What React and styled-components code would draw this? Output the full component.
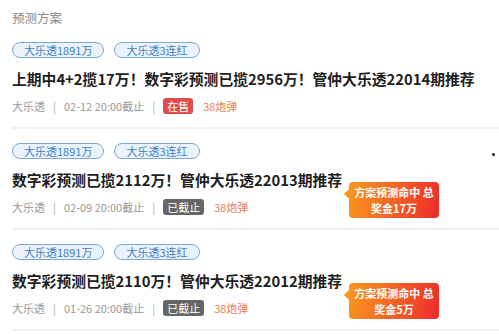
import styled, { createGlobalStyle } from "styled-components";

const Global = createGlobalStyle`
  body {
    margin: 0;
    background: #fff;
    font-family: "Noto Sans CJK SC", "Noto Sans", sans-serif;
  }
`;

const Page = styled.div`
  width: 499px;
  height: 334px;
  overflow: hidden;
  padding-left: 12px;
  box-sizing: border-box;
`;

const Heading = styled.div`
  padding-top: 8px;
  font-size: 12.5px;
  line-height: 20px;
  color: #888;
`;

const Card = styled.div`
  position: relative;
  padding: 14px 0 11px;
  border-bottom: 2px solid #f0f0f0;
  &:first-of-type {
    margin-top: 6px;
  }
`;

const Tags = styled.div`
  display: flex;
  gap: 10px;
`;

const Tag = styled.span`
  height: 16px;
  padding: 0 11px;
  box-sizing: border-box;
  border: 1px solid #79a9d9;
  border-radius: 8px;
  background: #eaf3fc;
  color: #3f7fc2;
  font-size: 11px;
  line-height: 14px;
`;

const Title = styled.div`
  margin-top: 9px;
  font-size: 14.8px;
  line-height: 24px;
  font-weight: 700;
  color: #1e1e1e;
  white-space: nowrap;
`;

const Meta = styled.div`
  margin-top: 5px;
  display: flex;
  align-items: center;
  height: 20px;
  font-size: 11px;
  color: #999;
`;

const Sep = styled.span`
  margin: 0 8px;
  color: #aaa;
`;

const Status = styled.span`
  padding: 0 4px;
  border-radius: 3px;
  line-height: 16px;
  color: #fff;
  background: ${(p) => (p.$open ? "#e04b4b" : "#666")};
`;

const Shells = styled.span`
  margin-left: 10px;
  color: #e8835a;
`;

const Prize = styled.div`
  position: absolute;
  left: 337px;
  top: 53px;
  width: 90px;
  padding: 2px 0;
  border-radius: 4px;
  background: linear-gradient(100deg, #f8981f, #ee2b2b);
  color: #fff;
  font-size: 11px;
  font-weight: 700;
  line-height: 16px;
  text-align: center;
  &::before {
    content: "";
    position: absolute;
    left: -5px;
    top: 7px;
    border-style: solid;
    border-width: 5px 5px 5px 0;
    border-color: transparent #f8981f transparent transparent;
  }
`;

const Dot = styled.i`
  position: absolute;
  left: 480px;
  top: 24px;
  width: 3px;
  height: 3px;
  border-radius: 50%;
  background: #111;
`;

const items = [
  {
    title: "上期中4+2揽17万！数字彩预测已揽2956万！管仲大乐透22014期推荐",
    date: "02-12 20:00截止",
    open: true,
  },
  {
    title: "数字彩预测已揽2112万！管仲大乐透22013期推荐",
    date: "02-09 20:00截止",
    prize: "17万",
    dot: true,
  },
  {
    title: "数字彩预测已揽2110万！管仲大乐透22012期推荐",
    date: "01-26 20:00截止",
    prize: "5万",
  },
];

export default function App() {
  return (
    <Page>
      <Global />
      <Heading>预测方案</Heading>
      {items.map((it) => (
        <Card key={it.title}>
          <Tags>
            <Tag>大乐透1891万</Tag>
            <Tag>大乐透3连红</Tag>
          </Tags>
          <Title>{it.title}</Title>
          <Meta>
            大乐透<Sep>|</Sep>
            {it.date}
            <Sep>|</Sep>
            <Status $open={it.open}>{it.open ? "在售" : "已截止"}</Status>
            <Shells>38炮弹</Shells>
          </Meta>
          {it.prize && (
            <Prize>
              方案预测命中 总
              <br />
              奖金{it.prize}
            </Prize>
          )}
          {it.dot && <Dot />}
        </Card>
      ))}
    </Page>
  );
}
